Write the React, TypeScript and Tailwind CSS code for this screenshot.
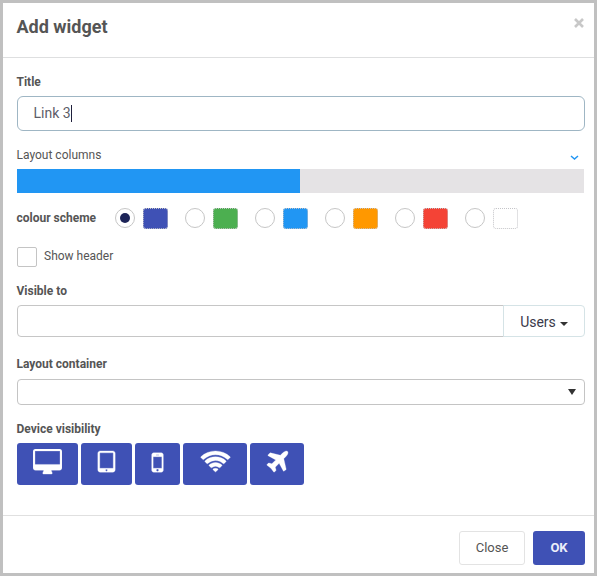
import React from "react";

const schemes = [
  { name: "indigo", swatch: "bg-[#3f51b5]" },
  { name: "green", swatch: "bg-[#4caf50]" },
  { name: "blue", swatch: "bg-[#2196f3]" },
  { name: "orange", swatch: "bg-[#ff9800]" },
  { name: "red", swatch: "bg-[#f44336]" },
  { name: "white", swatch: "bg-white" },
];

const devices = [
  {
    name: "Desktop",
    button: "w-[61px]",
    icon: "w-[29px]",
    box: "-64 0 1920 1792",
    d: "M1728 992v-832q0-13-9.5-22.5t-22.5-9.5h-1600q-13 0-22.5 9.5t-9.5 22.5v832q0 13 9.5 22.5t22.5 9.5h1600q13 0 22.5-9.5t9.5-22.5zm128-832v1088q0 66-47 113t-113 47h-544q0 37 16 77.5t32 71 16 43.5q0 26-19 45t-45 19h-512q-26 0-45-19t-19-45q0-14 16-44t32-70 16-78h-544q-66 0-113-47t-47-113v-1088q0-66 47-113t113-47h1600q66 0 113 47t47 113z",
  },
  {
    name: "Tablet",
    button: "w-[51px]",
    icon: "w-[27px]",
    box: "0 0 1792 1792",
    d: "M960 1408q0-26-19-45t-45-19-45 19-19 45 19 45 45 19 45-19 19-45zm384-160v-960q0-13-9.5-22.5t-22.5-9.5h-832q-13 0-22.5 9.5t-9.5 22.5v960q0 13 9.5 22.5t22.5 9.5h832q13 0 22.5-9.5t9.5-22.5zm128-960v1088q0 66-47 113t-113 47h-832q-66 0-113-47t-47-113v-1088q0-66 47-113t113-47h832q66 0 113 47t47 113z",
  },
  {
    name: "Phone",
    button: "w-[45px]",
    icon: "w-[27px]",
    box: "0 0 1792 1792",
    d: "M976 1408q0-33-23.5-56.5t-56.5-23.5-56.5 23.5-23.5 56.5 23.5 56.5 56.5 23.5 56.5-23.5 23.5-56.5zm208-160v-704q0-13-9.5-22.5t-22.5-9.5h-512q-13 0-22.5 9.5t-9.5 22.5v704q0 13 9.5 22.5t22.5 9.5h512q13 0 22.5-9.5t9.5-22.5zm-192-848q0-16-16-16h-160q-16 0-16 16t16 16h160q16 0 16-16zm288-16v1024q0 52-38 90t-90 38h-512q-52 0-90-38t-38-90v-1024q0-52 38-90t90-38h512q52 0 90 38t38 90z",
  },
  {
    name: "Online",
    button: "w-[64px]",
    icon: "w-[31px]",
    box: "0 0 2048 1792",
    d: "M1024 1523q-20 0-93-73.5t-73-93.5q0-32 62.5-54t103.5-22 103.5 22 62.5 54q0 20-73 93.5t-93 73.5zm270-271q-2 0-40-25t-101.5-50-128.5-25-128.5 25-101 50-40.5 25q-18 0-93.5-75t-75.5-93q0-13 10-23 78-77 196-121t233-44 233 44 196 121q10 10 10 23 0 18-75.5 93t-93.5 75zm273-272q-11 0-23-8-136-105-252-154.5t-268-49.5q-85 0-170.5 22t-149 53-113.5 62-79 53-31 22q-17 0-92-75t-75-93q0-12 10-22 132-132 320-205t380-73 380 73 320 205q10 10 10 22 0 18-75 93t-92 75zm271-271q-11 0-22-9-179-157-371.5-236.5t-420.5-79.5-420.5 79.5-371.5 236.5q-11 9-22 9-17 0-92.5-75t-75.5-93q0-13 10-23 187-186 445-288t527-102 527 102 445 288q10 10 10 23 0 18-75.5 93t-92.5 75z",
  },
  {
    name: "Offline",
    button: "w-[54px]",
    icon: "w-[27px]",
    box: "0 0 1792 1792",
    d: "M1568 160q44 52 12 148t-108 172l-161 161 160 696q5 19-12 33l-128 96q-7 6-19 6-4 0-7-1-15-3-21-16l-279-508-259 259 53 194q5 17-8 31l-96 96q-9 9-23 9h-2q-15-2-24-13l-189-252-252-189q-11-7-13-23-1-13 9-25l96-97q9-9 23-9 6 0 8 1l194 53 259-259-508-279q-14-8-17-24-2-16 9-27l128-128q14-13 30-8l665 159 160-160q76-76 172-108t148 12z",
  },
];

function Label({ children }: { children: React.ReactNode }) {
  return <div className="-ml-[0.5px] h-4 text-xs leading-4 font-bold">{children}</div>;
}

export default function App() {
  return (
    <div className="flex h-[576px] w-[597px] flex-col border-3 border-[#c0c0c0] bg-white font-['Roboto','Liberation_Sans',sans-serif] text-[#555555]">
      <header className="flex h-[55px] shrink-0 justify-between border-b border-[#dedfe0] pr-[10px] pl-[13.5px]">
        <h1 className="mt-3 text-lg leading-6 font-bold">Add widget</h1>
        <button aria-label="Dismiss" className="mt-[15px] h-[10px] w-[10px]">
          <svg viewBox="0 0 10 10" className="block h-[10px] w-[10px]" stroke="#c8c8c8" strokeWidth="2.6">
            <path d="M1 1l8 8M9 1l-8 8" />
          </svg>
        </button>
      </header>

      <main className="flex h-[457px] shrink-0 flex-col pr-[9px] pl-[14px]">
        <div className="mt-4">
          <Label>Title</Label>
        </div>
        <div className="mt-[6px] flex h-[35px] items-center rounded-md border border-[#9fb6c4] pb-px pl-[15.5px] text-sm text-[#5d5d68]">
          <span>Link 3</span>
          <span className="mt-px h-[17px] w-px bg-[#20203c]" />
        </div>

        <div className="mt-4 flex h-4 items-center justify-between pr-[6px] text-xs leading-4">
          <span className="-ml-[0.5px]">Layout columns</span>
          <svg viewBox="0 0 9 6" className="mt-[5px] h-[6px] w-[9px]" fill="none" stroke="#2196f3" strokeWidth="1.5">
            <path d="M1 1l3.5 3L8 1" />
          </svg>
        </div>
        <div className="mt-[6px] mr-px h-6 bg-[#e5e3e5]">
          <div className="h-full w-[283px] bg-[#2196f3]" />
        </div>

        <div className="mt-[14px] flex h-[22px] items-center">
          <span className="-ml-[0.5px] w-[98.5px] text-xs font-bold">colour scheme</span>
          <div className="flex gap-[17px]">
            {schemes.map((s, i) => (
              <div key={s.name} className="flex w-[53px] items-center justify-between">
                <span className="flex h-5 w-5 items-center justify-center rounded-full border border-[#c6c6c6]">
                  {i === 0 && <span className="h-[10px] w-[10px] rounded-full bg-[#1d2458]" />}
                </span>
                <span className={`h-[21px] w-[25px] rounded-[3px] border border-dotted border-[#c4c4c8] ${s.swatch}`} />
              </div>
            ))}
          </div>
        </div>

        <div className="mt-[18px] flex h-5 items-center gap-[7px] text-xs">
          <span className="h-5 w-5 rounded-[2px] border border-[#c4c4c4]" />
          <span className="pb-[2px]">Show header</span>
        </div>

        <div className="mt-4">
          <Label>Visible to</Label>
        </div>
        <div className="mt-[6px] flex h-8">
          <div className="w-[487px] rounded-l border border-[#c6c6c6]" />
          <button className="-ml-px flex flex-1 items-center justify-center gap-1 rounded-r border border-[#d5e3e6] pt-[2px] text-sm text-[#3a3a4a]">
            <span>Users</span>
            <svg viewBox="0 0 8 4" className="mt-[3px] h-1 w-2" fill="#333">
              <path d="M0 0h8L4 4z" />
            </svg>
          </button>
        </div>

        <div className="mt-[19px]">
          <Label>Layout container</Label>
        </div>
        <div className="mt-[7px] flex h-[26px] items-center justify-end rounded border border-[#c4c4c4] pr-[8px]">
          <svg viewBox="0 0 8 6" className="h-[6px] w-[8px]" fill="#333">
            <path d="M0 0h8L4 6z" />
          </svg>
        </div>

        <div className="mt-4">
          <Label>Device visibility</Label>
        </div>
        <div className="mt-[6px] flex h-[42px] gap-[3px]">
          {devices.map((v) => (
            <button
              key={v.name}
              aria-label={v.name}
              className={`flex items-start justify-center rounded-[3px] bg-[#3f51b5] pt-[6px] ${v.button}`}
            >
              <svg viewBox={v.box} className={`h-[27px] ${v.icon}`} fill="#fff" stroke="#fff" strokeWidth="20">
                <path d={v.d} />
              </svg>
            </button>
          ))}
        </div>
      </main>

      <footer className="flex flex-1 items-start justify-end gap-2 border-t border-[#e0e0e0] pt-[15px] pr-[9px]">
        <button className="h-[34px] w-[66px] rounded-[3px] border border-[#e3e3e3] text-[13px]">Close</button>
        <button className="h-[34px] w-[52px] rounded-[3px] bg-[#3f51b5] text-[13px] font-bold text-[#eceefa]">OK</button>
      </footer>
    </div>
  );
}
